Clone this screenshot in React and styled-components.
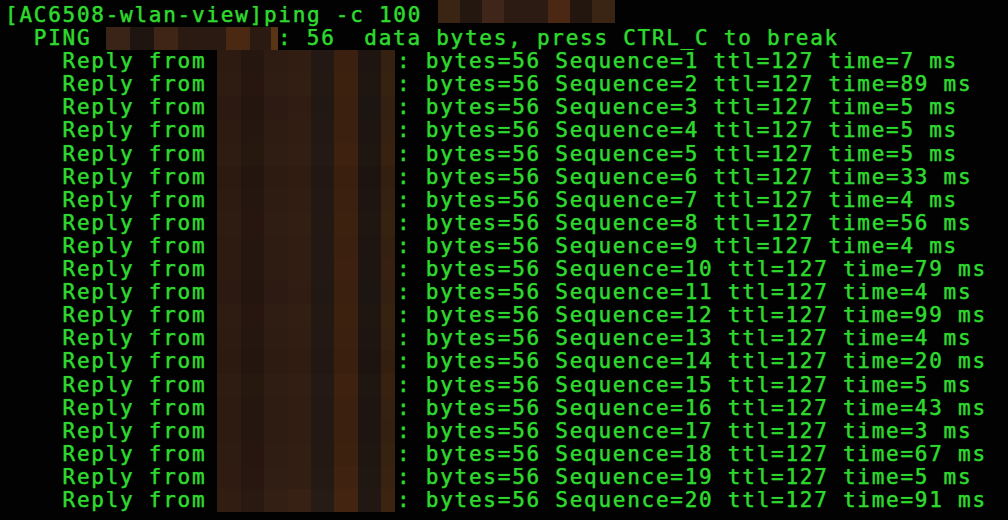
import styled, { createGlobalStyle } from 'styled-components';

const CELL = 14.36;

const GlobalStyle = createGlobalStyle`
  html, body {
    margin: 0;
    padding: 0;
    background: #000;
  }
`;

const Screen = styled.div`
  width: 1008px;
  height: 520px;
  overflow: hidden;
  background: #020202;
  padding: 4px 0 0 5px;
  box-sizing: border-box;
  font-family: "DejaVu Sans Mono", "Liberation Mono", monospace;
  font-size: 21px;
  letter-spacing: 1.74px;
  color: #2fd82f;
  -webkit-text-stroke: 0.25px #2fd82f;
  text-shadow: 0 0 1px rgba(40, 220, 40, 0.7);
`;

const Line = styled.div`
  display: flex;
  height: 23.1px;
  line-height: 23.1px;
  white-space: pre;
`;

const Text = styled.span``;

const Redact = styled.span`
  display: grid;
  grid-template-columns: ${(p) => p.cols};
  width: ${(p) => p.width}px;
  margin-left: ${(p) => p.shift || 0}px;
  margin-right: ${(p) => -(p.shift || 0)}px;
  margin-top: ${(p) => p.top || 0}px;
  height: ${(p) => p.h || 23.1}px;
  filter: brightness(${(p) => p.shade || 1});
`;

const Block = styled.span`
  background: ${(p) => p.color};
`;

const replyColors = ['#2d1a11', '#25160f', '#2e1c13', '#311d12', '#231813', '#3c200f', '#1e1511', '#36200f'];
const replyCols = '24px 23px 24px 23px 23px 24px 23px 14px';

const pingColors = ['#3a2418', '#1e1410', '#3f2515', '#2a1a12', '#2a1a12', '#4a2812', '#2a1a12', '#5a3414'];
const pingCols = '24px 24px 24px 24px 24px 24px 21px 7px';

const cmdColors = ['#3a2414', '#23170f', '#40261a', '#2c1b12', '#2c1b12', '#4a2814', '#23160f', '#3a2414'];
const cmdCols = '22px 22px 22px 22px 22px 22px 22px 23px';

const times = [7, 89, 5, 5, 5, 33, 4, 56, 4, 79, 4, 99, 4, 20, 5, 43, 3, 67, 5, 91];
const shades = [1, 1.02, 0.98, 1, 1.03, 0.97, 1, 1.02, 0.99, 1.01, 0.98, 1.02, 1, 0.97, 1.03, 1, 0.99, 1.02, 1.05, 1.12];

function Pixelated({ colors, cols, ...rest }) {
  return (
    <Redact cols={cols} {...rest}>
      {colors.map((c, i) => (
        <Block key={i} color={c} />
      ))}
    </Redact>
  );
}

export default function App() {
  return (
    <>
      <GlobalStyle />
      <Screen>
        <Line>
          <Text>[AC6508-wlan-view]ping -c 100 </Text>
          <Pixelated colors={cmdColors} cols={cmdCols} width={177} shift={1} top={-4} h={23} />
        </Line>
        <Line>
          <Text>  PING </Text>
          <Pixelated colors={pingColors} cols={pingCols} width={12 * CELL} />
          <Text>: 56  data bytes, press CTRL_C to break</Text>
        </Line>
        {times.map((t, i) => (
          <Line key={i}>
            <Text>    Reply from </Text>
            <Pixelated
              colors={replyColors}
              cols={replyCols}
              width={12 * CELL + 4}
              shift={-4}
              shade={shades[i]}
            />
            <Text>{`: bytes=56 Sequence=${i + 1} ttl=127 time=${t} ms`}</Text>
          </Line>
        ))}
      </Screen>
    </>
  );
}
